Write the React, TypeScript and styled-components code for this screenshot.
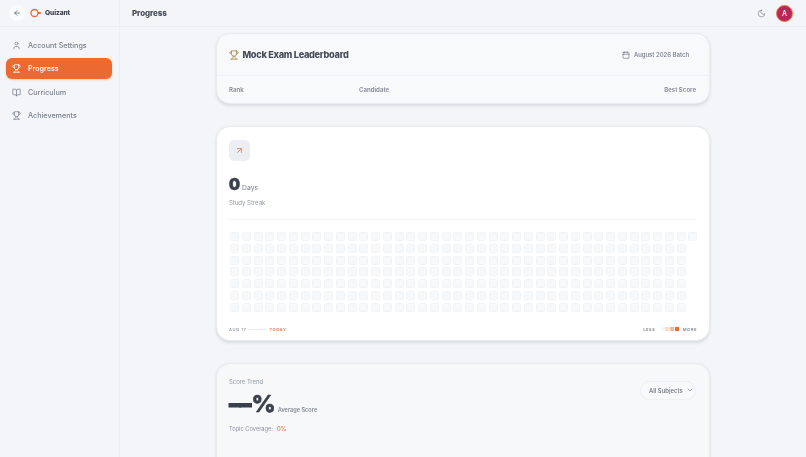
import React from 'react';
import styled, { createGlobalStyle } from 'styled-components';

const Global = createGlobalStyle`
  html, body { margin: 0; padding: 0; height: 100%; overflow: hidden; background: #f3f5f8; }
  body { font-family: Inter, "Liberation Sans", sans-serif; }
  #root { height: 100%; }
  * { box-sizing: border-box; }
`;

const Shell = styled.div`
  display: grid;
  grid-template-columns: 120px 1fr;
  grid-template-rows: 27px 1fr;
  width: 806px;
  height: 457px;
  overflow: hidden;
  background: #f3f5f8;
  filter: blur(0.3px);
`;

const Brand = styled.div`
  display: flex;
  align-items: center;
  padding-left: 9px;
  border-right: 1px solid #ebedf1;
  border-bottom: 1px solid #ebedf1;
`;

const BackButton = styled.div`
  display: flex;
  align-items: center;
  justify-content: center;
  width: 16px;
  height: 16px;
  border-radius: 50%;
  background: #fafbfc;
  color: #4b5563;
`;

const Logo = styled.svg`
  width: 12px;
  height: 10px;
  margin-left: 5px;
`;

const BrandName = styled.span`
  margin-left: 3px;
  font-size: 6.6px;
  font-weight: 800;
  color: #3a3f4c;
  letter-spacing: -0.1px;
`;

const TopBar = styled.header`
  display: flex;
  align-items: center;
  justify-content: space-between;
  padding: 0 13px 0 12px;
  border-bottom: 1px solid #ebedf1;
`;

const PageTitle = styled.h1`
  margin: 0;
  font-size: 8px;
  font-weight: 800;
  color: #474c59;
  letter-spacing: -0.1px;
`;

const TopActions = styled.div`
  display: flex;
  align-items: center;
  gap: 10px;
  color: #7a808c;
`;

const Avatar = styled.div`
  display: flex;
  align-items: center;
  justify-content: center;
  width: 17px;
  height: 17px;
  border-radius: 50%;
  background: #b9275a;
  border: 1px solid #ee7a45;
  color: #fff;
  font-size: 7px;
  font-weight: 500;
`;

const Sidebar = styled.nav`
  display: flex;
  flex-direction: column;
  gap: 2.5px;
  padding: 7.5px 7px 0 6px;
  border-right: 1px solid #ebedf1;
`;

const NavItem = styled.div<{ $active?: boolean }>`
  display: flex;
  align-items: center;
  gap: 7px;
  height: 21px;
  padding-left: 6px;
  border-radius: 6px;
  font-size: 7.2px;
  font-weight: 500;
  color: ${p => (p.$active ? '#fff' : '#7b818d')};
  background: ${p => (p.$active ? '#ec6a31' : 'transparent')};
  box-shadow: ${p => (p.$active ? '0 1px 2px rgba(236,106,49,.3)' : 'none')};
`;

const Main = styled.main`
  display: flex;
  flex-direction: column;
  align-items: center;
  gap: 22px;
  padding: 6px 96px 0 96px;
  overflow: hidden;
`;

const Card = styled.section<{ $tone?: string }>`
  flex: none;
  width: 494px;
  border-radius: 14px;
  border: 1px solid #e9ebef;
  background: ${p => p.$tone || '#fff'};
  box-shadow: 0 1.5px 3px rgba(80, 88, 105, 0.16);
`;

const LeaderHead = styled.div`
  display: flex;
  align-items: center;
  justify-content: space-between;
  height: 42px;
  padding: 0 20px 0 12px;
  border-bottom: 1px solid #eff0f4;
`;

const LeaderTitle = styled.h2`
  display: flex;
  align-items: center;
  gap: 3.5px;
  margin: 0;
  font-size: 9.2px;
  font-weight: 800;
  color: #474c59;
  letter-spacing: -0.3px;
`;

const TrophyTint = styled.span`
  display: flex;
  color: #a98a4e;
`;

const Batch = styled.div`
  display: flex;
  align-items: center;
  gap: 4px;
  font-size: 6px;
  font-weight: 500;
  color: #727885;
`;

const ColumnRow = styled.div`
  display: grid;
  grid-template-columns: 130px 1fr auto;
  align-items: center;
  height: 27px;
  padding: 0 13px 0 12px;
  font-size: 6.1px;
  font-weight: 600;
  color: #858a95;
`;

const StreakBody = styled.div`
  padding: 13px 12px 0;
  height: 213px;
`;

const IconTile = styled.div`
  display: flex;
  align-items: center;
  justify-content: center;
  width: 21px;
  height: 21px;
  border-radius: 5px;
  background: #eceef3;
  color: #e2805a;
`;

const StreakValue = styled.div`
  display: flex;
  align-items: baseline;
  margin-top: 16px;
  height: 15px;
  color: #3a3f4c;
`;

const BigNumber = styled.span`
  font-size: 15.5px;
  font-weight: 900;
  line-height: 15px;
  -webkit-text-stroke: 0.5px #3a3f4c;
  margin-right: 2px;
`;

const Unit = styled.span`
  font-size: 6.8px;
  color: #757b88;
`;

const Caption = styled.div`
  margin-top: 7px;
  font-size: 6px;
  color: #9398a3;
  padding-bottom: 13px;
  border-bottom: 1px solid #f3f4f6;
`;

const HeatGrid = styled.div`
  display: grid;
  grid-template-rows: repeat(7, 9px);
  grid-auto-flow: column;
  grid-auto-columns: 9px;
  gap: 2.75px;
  margin-top: 12px;
  padding-left: 1px;
`;

const HeatCell = styled.div`
  background: #f7f8f9;
  border: 1px solid #f3f4f6;
  border-radius: 1.5px;
`;

const HeatFooter = styled.div`
  display: flex;
  align-items: center;
  justify-content: space-between;
  margin-top: 15px;
  font-size: 4.1px;
  font-weight: 600;
  letter-spacing: 0.55px;
  color: #9a9fa9;
`;

const RangeLabels = styled.div`
  display: flex;
  align-items: center;
  gap: 3px;
`;

const RangeLine = styled.span`
  width: 17px;
  height: 1px;
  background: #e7e9ed;
`;

const Today = styled.span`
  color: #e9835a;
  font-weight: 700;
`;

const Legend = styled.div`
  display: flex;
  align-items: center;
  color: #808592;
`;

const Swatch = styled.span<{ $c: string }>`
  width: 4px;
  height: 4px;
  margin-right: 0.8px;
  background: ${p => p.$c};
`;

const Swatches = styled.div`
  display: flex;
  margin: 0 3px 0 5px;
`;

const TrendBody = styled.div`
  display: flex;
  justify-content: space-between;
  height: 120px;
  padding: 13.5px 13px 0 12px;
`;

const TrendLabel = styled.div`
  font-size: 5.9px;
  color: #939aa5;
`;

const ScoreLine = styled.div`
  display: flex;
  align-items: baseline;
  gap: 2px;
  margin-top: 7.5px;
  height: 24px;
`;

const ScoreValue = styled.span`
  font-size: 23.5px;
  line-height: 24px;
  font-weight: 800;
  color: #3a3f4c;
  -webkit-text-stroke: 0.6px #3a3f4c;
`;

const ScoreDashes = styled.span`
  letter-spacing: -1px;
  margin-right: 1px;
  font-weight: 900;
  -webkit-text-stroke: 1px #3a3f4c;
`;

const ScoreCaption = styled.span`
  font-size: 5.6px;
  font-weight: 600;
  color: #858a95;
`;

const Coverage = styled.div`
  display: flex;
  gap: 4px;
  margin-top: 8.5px;
  font-size: 5.7px;
  color: #8d92a0;
`;

const CoverageValue = styled.span`
  color: #e9835a;
  font-weight: 600;
`;

const Select = styled.div`
  display: flex;
  align-items: center;
  justify-content: space-between;
  width: 56px;
  height: 19px;
  margin-top: 3px;
  padding: 0 1px 0 8px;
  border-radius: 10px;
  background: #f8f9fb;
  border: 1px solid #eef0f3;
  font-size: 5.9px;
  font-weight: 600;
  color: #7c818a;
  white-space: nowrap;
`;

const Stroke = ({ size = 9, children, sw = 2 }: { size?: number; children: React.ReactNode; sw?: number }) => (
  <svg width={size} height={size} viewBox="0 0 24 24" fill="none" stroke="currentColor" strokeWidth={sw} strokeLinecap="round" strokeLinejoin="round">
    {children}
  </svg>
);

const Trophy = ({ size = 9, sw = 2 }: { size?: number; sw?: number }) => (
  <Stroke size={size} sw={sw}>
    <path d="M6 9H4.5a2.5 2.5 0 0 1 0-5H6" />
    <path d="M18 9h1.5a2.5 2.5 0 0 0 0-5H18" />
    <path d="M4 22h16" />
    <path d="M10 14.66V17c0 .55-.47.98-.97 1.21C7.85 18.75 7 20.24 7 22" />
    <path d="M14 14.66V17c0 .55.47.98.97 1.21C16.15 18.75 17 20.24 17 22" />
    <path d="M18 2H6v7a6 6 0 0 0 12 0V2Z" />
  </Stroke>
);

const navIcons = {
  user: (
    <Stroke>
      <path d="M19 21v-2a4 4 0 0 0-4-4H9a4 4 0 0 0-4 4v2" />
      <circle cx="12" cy="7" r="4" />
    </Stroke>
  ),
  trophy: <Trophy />,
  book: (
    <Stroke>
      <path d="M12 7v14" />
      <path d="M3 18a1 1 0 0 1-1-1V4a1 1 0 0 1 1-1h5a4 4 0 0 1 4 4 4 4 0 0 1 4-4h5a1 1 0 0 1 1 1v13a1 1 0 0 1-1 1h-6a3 3 0 0 0-3 3 3 3 0 0 0-3-3z" />
    </Stroke>
  ),
};

const cells = Array.from({ length: 274 });

export default function App() {
  return (
    <Shell>
      <Global />
      <Brand>
        <BackButton>
          <Stroke size={8}>
            <path d="m12 19-7-7 7-7" />
            <path d="M19 12H5" />
          </Stroke>
        </BackButton>
        <Logo viewBox="0 0 24 20" fill="none">
          <circle cx="9" cy="10" r="7" stroke="#ec6a31" strokeWidth="2.6" />
          <path d="M17.5 10h2.5" stroke="#ec6a31" strokeWidth="4" strokeLinecap="round" />
        </Logo>
        <BrandName>Quizant</BrandName>
      </Brand>
      <TopBar>
        <PageTitle>Progress</PageTitle>
        <TopActions>
          <Stroke size={9} sw={1.7}>
            <path d="M12 3a6 6 0 0 0 9 9 9 9 0 1 1-9-9Z" />
          </Stroke>
          <Avatar>A</Avatar>
        </TopActions>
      </TopBar>
      <Sidebar>
        <NavItem>{navIcons.user}Account Settings</NavItem>
        <NavItem $active>{navIcons.trophy}Progress</NavItem>
        <NavItem>{navIcons.book}Curriculum</NavItem>
        <NavItem>{navIcons.trophy}Achievements</NavItem>
      </Sidebar>
      <Main>
        <Card $tone="#f8f9fb">
          <LeaderHead>
            <LeaderTitle>
              <TrophyTint>
                <Trophy size={10} />
              </TrophyTint>
              Mock Exam Leaderboard
            </LeaderTitle>
            <Batch>
              <Stroke size={8}>
                <path d="M8 2v4" />
                <path d="M16 2v4" />
                <rect width="18" height="18" x="3" y="4" rx="2" />
                <path d="M3 10h18" />
              </Stroke>
              August 2026 Batch
            </Batch>
          </LeaderHead>
          <ColumnRow>
            <span>Rank</span>
            <span>Candidate</span>
            <span>Best Score</span>
          </ColumnRow>
        </Card>
        <Card>
          <StreakBody>
            <IconTile>
              <Stroke size={9} sw={2.4}>
                <path d="M7 7h10v10" />
                <path d="M7 17 17 7" />
              </Stroke>
            </IconTile>
            <StreakValue>
              <BigNumber>0</BigNumber>
              <Unit>Days</Unit>
            </StreakValue>
            <Caption>Study Streak</Caption>
            <HeatGrid>
              {cells.map((_, i) => (
                <HeatCell key={i} />
              ))}
            </HeatGrid>
            <HeatFooter>
              <RangeLabels>
                <span>AUG 17</span>
                <RangeLine />
                <Today>TODAY</Today>
              </RangeLabels>
              <Legend>
                <span>LESS</span>
                <Swatches>
                  <Swatch $c="#f6f6f7" />
                  <Swatch $c="#f8dccf" />
                  <Swatch $c="#f4b59a" />
                  <Swatch $c="#ec6a31" />
                </Swatches>
                <span>MORE</span>
              </Legend>
            </HeatFooter>
          </StreakBody>
        </Card>
        <Card $tone="#f7f8fa">
          <TrendBody>
            <div>
              <TrendLabel>Score Trend</TrendLabel>
              <ScoreLine>
                <ScoreValue>
                  <ScoreDashes>––</ScoreDashes>%
                </ScoreValue>
                <ScoreCaption>Average Score</ScoreCaption>
              </ScoreLine>
              <Coverage>
                Topic Coverage:
                <CoverageValue>0%</CoverageValue>
              </Coverage>
            </div>
            <Select>
              All Subjects
              <Stroke size={8}>
                <path d="m6 9 6 6 6-6" />
              </Stroke>
            </Select>
          </TrendBody>
        </Card>
      </Main>
    </Shell>
  );
}
